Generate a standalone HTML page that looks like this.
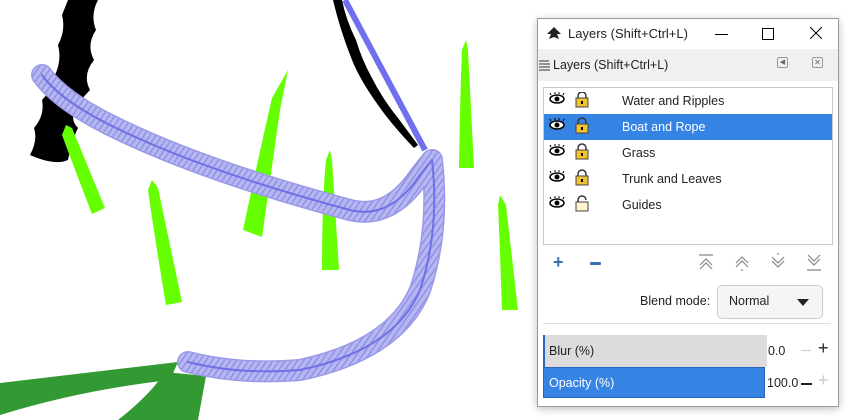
<!DOCTYPE html>
<html><head><style>
body{margin:0;width:854px;height:420px;background:#fff;overflow:hidden;font-family:"Liberation Sans",sans-serif;position:relative}
svg.c{position:absolute;left:0;top:0}
.win{position:absolute;left:537px;top:18px;width:300px;height:387px;background:#fff;border:1px solid #9a9a9a;box-shadow:0 2px 8px rgba(0,0,0,.25);font-size:12.5px;color:#222}
.tb{height:30px;position:relative}
.hd{position:absolute;top:30px;left:0;right:0;height:32px;background:#f0f0f0}
.list{position:absolute;left:5px;top:68px;width:288px;height:156px;border:1px solid #c8c8c8;background:#fff}
.row{height:26px;position:relative;line-height:26px}
.row.sel{background:#3584e4;color:#fff}
.row span{position:absolute;left:78px}
.abs{position:absolute}
</style></head><body>
<svg class="c" width="540" height="420">
<defs><pattern id="h" width="5" height="5" patternUnits="userSpaceOnUse" patternTransform="rotate(35)"><rect width="5" height="5" fill="#b6b6f2"/><rect width="1.2" height="5" fill="#8a8ae0"/></pattern></defs>
<g fill="#000">
<path d="M68 0 L98 0 Q90 15 96 30 Q86 45 94 60 Q82 75 90 90 Q80 100 75 110 Q70 120 78 128 Q72 140 68 160 Q55 166 30 155 Q38 140 34 128 Q45 115 42 100 Q52 90 55 75 Q62 60 58 45 Q66 30 62 15Z"/>
<path d="M333 0 L342 0 Q346 20 356 40 Q362 60 372 78 Q382 98 398 118 L418 145 L414 148 Q392 125 378 105 Q360 80 352 60 Q340 30 333 0Z"/>
</g>
<path d="M345 0 L425 150" stroke="#7070ee" stroke-width="6" fill="none"/>
<g fill="#66ff00">
<path d="M66 125 L72 128 L105 208 L92 214 Q75 170 62 135Z"/>
<path d="M152 180 L158 188 L182 302 L166 305 Q155 240 148 190Z"/>
<path d="M288 70 L280 110 L262 237 L243 230 Q260 150 272 98Z"/>
<path d="M330 150 L332 160 L339 270 L322 270 Q322 200 326 160Z"/>
<path d="M466 40 L468 50 L474 168 L459 168 Q460 100 462 50Z"/>
<path d="M500 195 L506 205 L518 310 L502 310 Q500 250 498 205Z"/>
</g>
<g fill="#339933">
<path d="M0 383 L178 362 L170 380 Q80 390 0 415Z"/>
<path d="M165 372 L206 376 L198 420 L118 420 Q150 395 165 372Z"/>
</g>
<g fill="none" stroke-linecap="round">
<path d="M42 75 Q60 100 110 125 Q200 170 350 210 Q390 220 420 175 L432 160" stroke="#9a9ae8" stroke-width="22"/>
<path d="M432 160 Q440 230 420 290 Q395 350 300 370 Q240 375 188 362" stroke="#9a9ae8" stroke-width="22"/>
<path d="M42 75 Q60 100 110 125 Q200 170 350 210 Q390 220 420 175 L432 160" stroke="url(#h)" stroke-width="19"/>
<path d="M432 160 Q440 230 420 290 Q395 350 300 370 Q240 375 188 362" stroke="url(#h)" stroke-width="19"/>
<path d="M42 75 Q60 100 110 125 Q200 170 350 210 Q390 220 420 175 L432 160" stroke="#7070e6" stroke-width="2"/>
<path d="M432 160 Q440 230 420 290 Q395 350 300 370 Q240 375 188 362" stroke="#7070e6" stroke-width="2"/>
</g>
</svg>
<div class="win">
<div class="tb">
<svg class="abs" style="left:8px;top:7px" width="16" height="16"><path d="M8 1 L15 8 L11 8 L13 13 L8 11 L3 13 L5 8 L1 8Z" fill="#222"/></svg>
<div class="abs" style="left:30px;top:7px;font-size:13px">Layers (Shift+Ctrl+L)</div>
<div class="abs" style="left:177px;top:15px;width:13px;height:1px;background:#000"></div>
<div class="abs" style="left:224px;top:9px;width:10px;height:10px;border:1px solid #000"></div>
<svg class="abs" style="left:272px;top:8px" width="12" height="12"><path d="M0 0L12 12M12 0L0 12" stroke="#000"/></svg>
</div>
<div class="hd">
<svg class="abs" style="left:0px;top:10px" width="14" height="12"><path d="M1 2h10M1 5h11M1 8h11M1 11h11" stroke="#333"/></svg>
<div class="abs" style="left:15px;top:9px">Layers (Shift+Ctrl+L)</div>
<div class="abs" style="left:239px;top:8px;width:9px;height:9px;border:1px solid #999;border-radius:2px;font-size:7px;color:#666;text-align:center;line-height:9px">◀</div>
<div class="abs" style="left:274px;top:8px;width:9px;height:9px;border:1px solid #999;border-radius:2px;font-size:8px;color:#666;text-align:center;line-height:9px">✕</div>
</div>
<div class="list">
<div class="row"><span>Water and Ripples</span></div>
<div class="row sel"><span>Boat and Rope</span></div>
<div class="row"><span>Grass</span></div>
<div class="row"><span>Trunk and Leaves</span></div>
<div class="row"><span>Guides</span></div>
</div>
<svg class="abs" style="left:10px;top:73px" width="50" height="130">
<g id="e"><ellipse cx="9" cy="7" rx="7" ry="4" fill="#fff" stroke="#000" stroke-width="1.5"/><circle cx="9" cy="7" r="2.5" fill="#000"/><path d="M3 3l-1-2M7 2l0-2M11 2l0-2M15 3l1-2" stroke="#000"/></g>
<use href="#e" y="26"/><use href="#e" y="52"/><use href="#e" y="78"/><use href="#e" y="104"/>
<g id="l" transform="translate(27,0)"><path d="M3 6V4a4 4 0 0 1 8 0v2" fill="none" stroke="#333" stroke-width="1.5"/><rect x="1" y="6" width="12" height="9" fill="#f2c230" stroke="#444"/><rect x="6" y="9" width="2" height="3" fill="#000"/></g>
<use href="#l" y="26"/><use href="#l" y="52"/><use href="#l" y="78"/>
<g transform="translate(27,104)"><path d="M3 6V4a4 4 0 0 1 8 0" fill="none" stroke="#333" stroke-width="1.5"/><rect x="1" y="6" width="12" height="9" fill="#fff6d0" stroke="#444"/></g>
</svg>
<div class="abs" style="left:15px;top:236px;color:#3a6fb0;font-weight:bold;font-size:18px;line-height:14px">+</div>
<div class="abs" style="left:52px;top:243px;width:11px;height:3px;background:#3a6fb0;border-radius:1px"></div>
<svg class="abs" style="left:160px;top:234px" width="130" height="20" fill="none" stroke="#888" stroke-width="1.2">
<path d="M1 2h14M2 12l6-6 6 6M2 16l6-6 6 6"/>
<path d="M38 10l6-6 6 6M38 14l6-6 6 6M44 16v2"/>
<path d="M74 8l6 6 6-6M74 4l6 6 6-6M80 0v2"/>
<path d="M110 2l6 6 6-6M110 6l6 6 6-6M109 17h14"/>
</svg>
<div class="abs" style="left:102px;top:275px">Blend mode:</div>
<div class="abs" style="left:179px;top:266px;width:104px;height:32px;border:1px solid #ccc;border-radius:5px;background:#f5f5f5">
<span class="abs" style="left:11px;top:8px">Normal</span>
<svg class="abs" style="left:79px;top:13px" width="12" height="7"><path d="M0 0h12L6 7Z" fill="#222"/></svg>
</div>
<div class="abs" style="left:5px;top:304px;width:288px;height:1px;background:#ddd"></div>
<div class="abs" style="left:5px;top:316px;width:222px;height:32px;background:#dddcdb;border-left:2px solid #2a64c0"></div>
<div class="abs" style="left:11px;top:325px">Blur (%)</div>
<div class="abs" style="left:230px;top:325px">0.0</div>
<div class="abs" style="left:263px;top:331px;width:10px;height:1px;background:#ccc"></div>
<div class="abs" style="left:280px;top:319px;font-size:18px">+</div>
<div class="abs" style="left:5px;top:348px;width:222px;height:31px;background:#3584e4;border:1px solid #2a64c0;box-sizing:border-box"></div>
<div class="abs" style="left:11px;top:357px;color:#fff">Opacity (%)</div>
<div class="abs" style="left:229px;top:357px">100.0</div>
<div class="abs" style="left:263px;top:364px;width:11px;height:2px;background:#222"></div>
<div class="abs" style="left:280px;top:351px;font-size:18px;color:#ccc">+</div>
</div>
</body></html>
